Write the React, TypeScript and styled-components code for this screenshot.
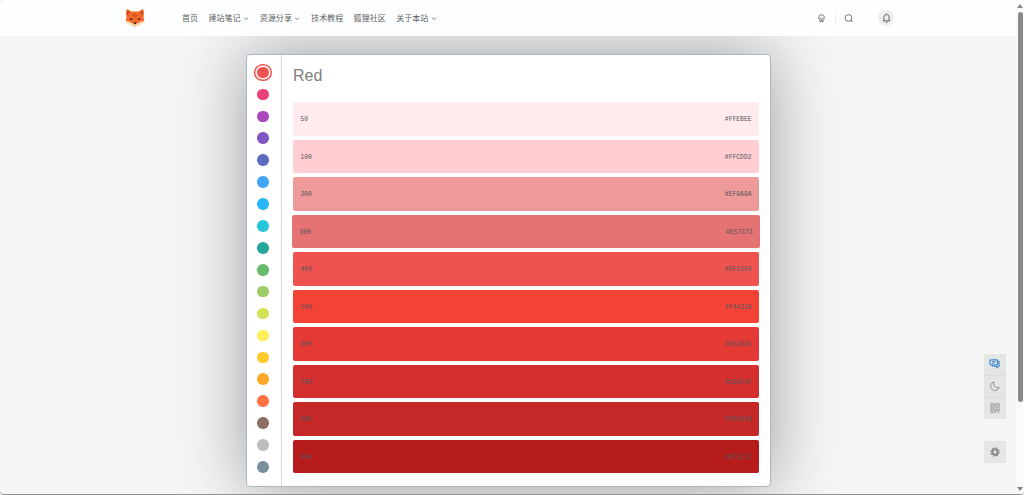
import React, { useState } from "react";
import styled, { createGlobalStyle } from "styled-components";

const GlobalStyle = createGlobalStyle`
  *,
  *::before,
  *::after {
    box-sizing: border-box;
  }

  body {
    margin: 0;
    background: #f4f5f7;
    font-family: "Liberation Sans", "Noto Sans CJK SC", sans-serif;
    overflow: hidden;
  }

  button {
    padding: 0;
    border: none;
    background: none;
    font: inherit;
    color: inherit;
    cursor: pointer;
  }
`;

const menu = [
  { label: "首页" },
  { label: "建站笔记", sub: true },
  { label: "资源分享", sub: true },
  { label: "技术教程" },
  { label: "狐狸社区" },
  { label: "关于本站", sub: true },
];

const palette = [
  "#ef5350",
  "#ec407a",
  "#ab47bc",
  "#7e57c2",
  "#5c6bc0",
  "#42a5f5",
  "#29b6f6",
  "#26c6da",
  "#26a69a",
  "#66bb6a",
  "#9ccc65",
  "#d4e157",
  "#ffee58",
  "#ffca28",
  "#ffa726",
  "#ff7043",
  "#8d6e63",
  "#bdbdbd",
  "#78909c",
];

const shades = [
  { level: "50", hex: "#FFEBEE" },
  { level: "100", hex: "#FFCDD2" },
  { level: "200", hex: "#EF9A9A" },
  { level: "300", hex: "#E57373" },
  { level: "400", hex: "#EF5350" },
  { level: "500", hex: "#F44336" },
  { level: "600", hex: "#E53935" },
  { level: "700", hex: "#D32F2F" },
  { level: "800", hex: "#C62828" },
  { level: "900", hex: "#B71C1C" },
];

const FoxLogo = () => (
  <svg width="20" height="18" viewBox="0 0 20 18">
    <path d="M1.700.3C1 2.500.9 5 1.500 7.500L.7 12.300l4.500 3.200L10 17.700l4.800-2.200 4.500-3.200-.8-4.800c.6-2.500.5-5-.2-7.200-1.800.2-3.200 1-4.400 2.200H6.100C4.900 1.300 3.500.5 1.700.3z" fill="#f4682a" />
    <path d="M2.500 1.500c-.5 1.800-.5 3.400-.1 5.100.4-1.400 1.100-2.300 2.300-3.200zM17.500 1.500c.5 1.800.5 3.400.1 5.100-.4-1.400-1.100-2.300-2.300-3.200z" fill="#b4441f" />
    <path d="M.8 12.200c2.400-.3 4.300.4 5.700 1.700 1 .8 6 .8 7 0 1.400-1.300 3.300-2 5.700-1.700-1.200 1.800-2.700 2.700-4.400 3.500L10 17.800l-4.800-2.100C3.500 14.900 2 14 .8 12.200z" fill="#fbdcae" />
    <path d="M8.200 13.500h3.600L10 15.700z" fill="#28201f" />
    <path d="M4.900 10.600q1.100-1.600 2.400 0M15.100 10.600q-1.100-1.600-2.400 0" stroke="#4e1d12" strokeWidth="1.300" fill="none" />
    <path d="M10 4v4.500M7.500 5.300l1 2.200M12.500 5.300l-1 2.200" stroke="#c34518" strokeWidth=".9" />
  </svg>
);

const BadgeIcon = () => (
  <svg width="9" height="9" viewBox="0 0 9 9" fill="none" stroke="#666" strokeWidth=".85">
    <circle cx="4.500" cy="3.600" r="2.900" />
    <path d="M2.800 3.900q1.700 1.500 3.400 0M3.100 6.200v1.900l1.400-.8 1.400.8V6.200" />
  </svg>
);

const SearchIcon = () => (
  <svg width="9" height="9" viewBox="0 0 9 9" fill="none" stroke="#666" strokeWidth=".9">
    <circle cx="4.500" cy="4" r="3.400" />
    <path d="m6.600 6 1.700 2" />
  </svg>
);

const BellIcon = () => (
  <svg width="9" height="10" viewBox="0 0 9 10" fill="none" stroke="#555" strokeWidth=".9">
    <path d="M4.500.5v.8M.9 7.800h7.200M1.900 7.700V4.200a2.600 2.700 0 0 1 5.200 0v3.500M3.500 9.200h2" />
  </svg>
);

const ChatIcon = () => (
  <svg width="11" height="10" viewBox="0 0 11 10" fill="none" stroke="#438bcc" strokeWidth="1.150" strokeLinejoin="round">
    <path d="M1.800.9h6q.7 0 .7.700v3.600q0 .7-.7.700H5L3.400 7.200V5.900H1.800q-.7 0-.7-.7V1.600q0-.7.700-.7z" />
    <path d="M8.700 2.300h.8q.6 0 .6.600v3.900q0 .6-.6.600h-.8v1.500L6.900 7.400H5M2.900 2.700h3.800M2.900 4.200h2.500" />
  </svg>
);

const MoonIcon = () => (
  <svg width="10" height="10" viewBox="0 0 10 10" fill="none" stroke="#8a8c8c" strokeWidth=".95">
    <path d="M4 .8C2.600 4 5 7.300 9.200 6.500A4.400 4.400 0 1 1 4 .8z" />
  </svg>
);

const QrIcon = () => (
  <svg width="10" height="10" viewBox="0 0 10 10" fill="none" stroke="#949695" strokeWidth="1">
    <path d="M.8.8h3.400v3.400H.8zM5.800.8h3.400v3.400H5.800zM.8 5.800h3.400v3.400H.8zM5.800 9.600V5.800h1.600v1.700h1.800V5.400M7.500 9.200h1.900M2.100 2.500h.8M7.100 2.500h.8M2.100 7.500h.8" />
  </svg>
);

const GearIcon = () => (
  <svg width="10" height="10" viewBox="0 0 10 10" fill="none" stroke="#898b8b">
    <circle cx="5" cy="5" r="2.700" strokeWidth="2.100" />
    <circle cx="5" cy="5" r="4.100" strokeWidth="1.200" strokeDasharray="1.700 1.520" />
  </svg>
);

const App = () => {
  const [active, setActive] = useState(0);

  return (
    <>
      <GlobalStyle />
      <Page>
        <Header>
          <Logo>
            <FoxLogo />
          </Logo>
          <Nav>
            {menu.map((m) => (
              <NavItem key={m.label}>
                {m.label}
                {m.sub && (
                  <svg width="6" height="4" viewBox="0 0 6 4" fill="none" stroke="#777" strokeWidth=".9">
                    <path d="m.8.5 2.200 2.100L5.200.5" />
                  </svg>
                )}
              </NavItem>
            ))}
          </Nav>
          <Tools>
            <BadgeIcon />
            <Separator />
            <SearchIcon />
            <Bell>
              <BellIcon />
            </Bell>
          </Tools>
        </Header>

        <Main>
          <Panel>
            <Swatches>
              {palette.map((c, i) => (
                <Swatch
                  key={c}
                  $color={c}
                  $active={i === active}
                  onClick={() => setActive(i)}
                />
              ))}
            </Swatches>
            <Content>
              <Title>Red</Title>
              <Shades>
                {shades.map((s) => (
                  <Shade key={s.hex} $color={s.hex} $raised={s.level === "300"}>
                    <Code>{s.level}</Code>
                    <Code>{s.hex}</Code>
                  </Shade>
                ))}
              </Shades>
            </Content>
          </Panel>
        </Main>

        <Float>
          <FloatGroup>
            <FloatButton>
              <ChatIcon />
            </FloatButton>
            <FloatButton>
              <MoonIcon />
            </FloatButton>
            <FloatButton>
              <QrIcon />
            </FloatButton>
          </FloatGroup>
          <FloatButton>
            <GearIcon />
          </FloatButton>
        </Float>

        <Scrollbar>
          <Arrow />
          <Thumb />
          <Arrow $down />
        </Scrollbar>
      </Page>
    </>
  );
};

const Page = styled.div`
  position: relative;
  width: 1024px;
  height: 495px;
  overflow: hidden;
  background: #f4f5f7;
  border-bottom: 1px solid #8f9091;
  border-radius: 5px 5px 4px 4px;
`;

const Header = styled.header`
  position: relative;
  z-index: 2;
  display: flex;
  align-items: center;
  height: 36px;
  padding-left: 125px;
  background: rgba(253, 254, 255, 0.96);
`;

const Logo = styled.div`
  display: flex;
  width: 57px;
`;

const Nav = styled.nav`
  display: flex;
  align-items: center;
  gap: 10.4px;
  padding-top: 1px;
`;

const NavItem = styled.a`
  display: flex;
  align-items: center;
  gap: 2.5px;
  font-size: 8.06px;
  line-height: 12px;
  white-space: nowrap;
  color: #5c5e60;

  svg {
    margin-right: 0.2px;
  }
`;

const Tools = styled.div`
  display: flex;
  align-items: center;
  margin-left: auto;
  padding-right: 130px;
`;

const Separator = styled.i`
  width: 1px;
  height: 9px;
  margin: 0 8.5px 0 9px;
  background: #e8e9ea;
`;

const Bell = styled.button`
  display: flex;
  align-items: center;
  justify-content: center;
  width: 16px;
  height: 16px;
  margin-left: 25px;
  border-radius: 50%;
  background: #eeeeef;
`;

const Main = styled.main`
  padding: 18px 0 0 246px;
`;

const Panel = styled.section`
  display: flex;
  width: 525px;
  height: 433px;
  border: 1px solid #a9b8c0;
  border-radius: 4px;
  background: #fff;
  box-shadow: 0 0 66px rgba(0, 0, 0, 0.36);
`;

const Swatches = styled.div`
  display: flex;
  flex-direction: column;
  align-items: center;
  width: 35px;
  padding: 6.6px 1.6px 0 0;
  border-right: 1px solid #d9dada;
`;

const Swatch = styled.button<{ $color: string; $active: boolean }>`
  display: flex;
  align-items: center;
  justify-content: center;
  flex: none;
  width: 18px;
  height: 21.91px;

  &::before {
    content: "";
    flex: none;
    width: 11.6px;
    height: 11.6px;
    border-radius: 50%;
    background: ${(p) => p.$color};
    box-shadow: ${(p) =>
      p.$active ? `0 0 0 1.6px #fff, 0 0 0 3.1px ${p.$color}` : "none"};
  }
`;

const Content = styled.div`
  flex: 1;
  padding: 9.5px 11px 0;
`;

const Title = styled.h1`
  margin: 0;
  font-size: 16px;
  font-weight: 400;
  line-height: 22px;
  color: #808080;
`;

const Shades = styled.div`
  display: flex;
  flex-direction: column;
  gap: 4.15px;
  margin-top: 15.8px;
`;

const Shade = styled.div<{ $color: string; $raised: boolean }>`
  display: flex;
  align-items: center;
  justify-content: space-between;
  height: 33.35px;
  padding: 1.4px 7.5px 0;
  border-radius: 2px;
  background: ${(p) => p.$color};
  ${(p) => p.$raised && "margin: 0 -1px;"}
`;

const Code = styled.span`
  font-family: "Liberation Mono", monospace;
  font-size: 6.35px;
  color: #55565a;
  transform: scaleY(1.22);
`;

const Float = styled.aside`
  position: absolute;
  z-index: 3;
  top: 353.5px;
  right: 18.5px;
  display: flex;
  flex-direction: column;
  gap: 22px;
`;

const FloatGroup = styled.div`
  display: flex;
  flex-direction: column;
`;

const FloatButton = styled.button`
  display: flex;
  align-items: center;
  justify-content: center;
  width: 21.6px;
  height: 21.8px;
  background: #e4e6e6;

  & + & {
    padding-bottom: 1.2px;
    border-top: 1px solid #dcdede;
  }
`;

const Scrollbar = styled.div`
  position: absolute;
  z-index: 4;
  top: 0;
  right: 0;
  display: flex;
  flex-direction: column;
  align-items: center;
  width: 8px;
  height: 494px;
  padding: 4px 0 3px;
  background: #fbfbfb;
`;

const Arrow = styled.i<{ $down?: boolean }>`
  border: 3px solid transparent;
  ${(p) =>
    p.$down
      ? "border-bottom: none; border-top: 4px solid #858585;"
      : "border-top: none; border-bottom: 4px solid #858585;"}
`;

const Thumb = styled.div`
  width: 5px;
  height: 390px;
  margin: 4px 0 auto;
  border-radius: 3px;
  background: #8a8a8a;
`;

export default App;
